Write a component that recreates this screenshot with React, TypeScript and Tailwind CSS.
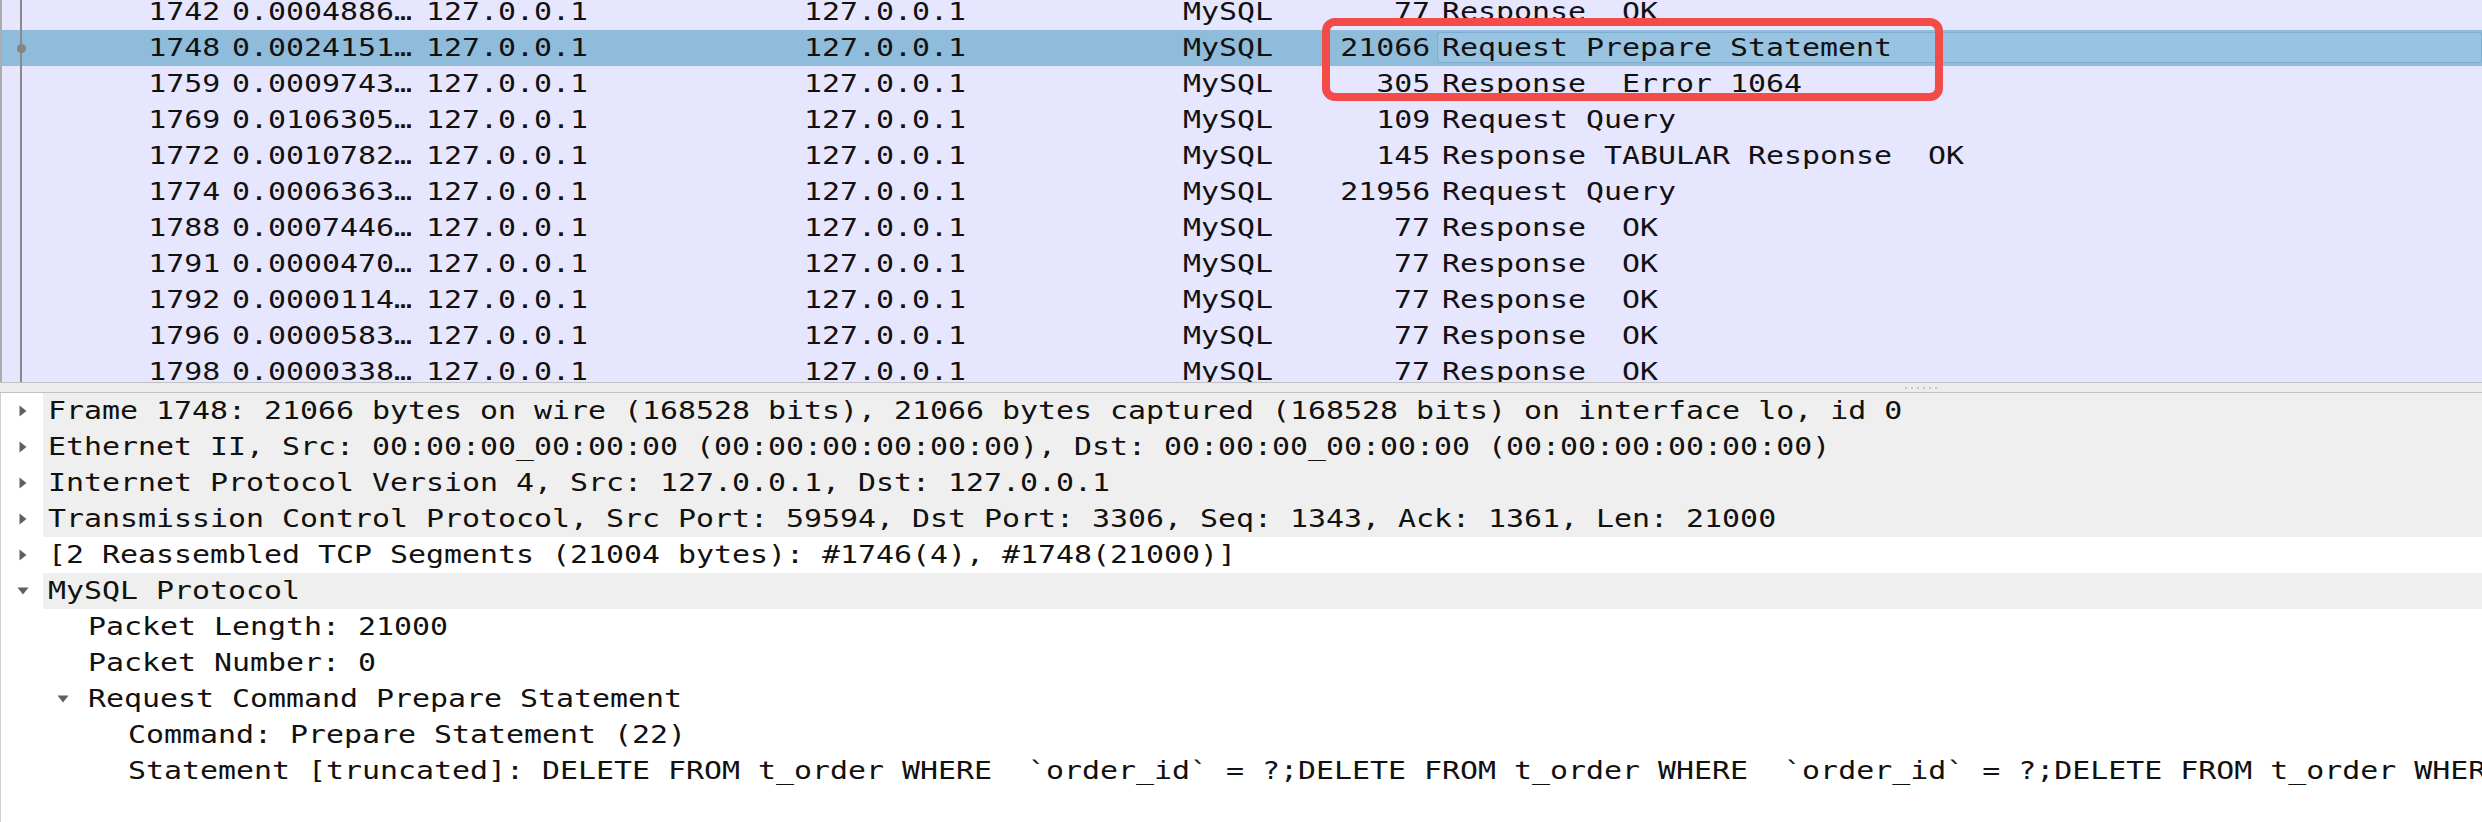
import React from 'react';

type Packet = {
  no: number;
  time: string;
  len: string;
  info: string;
  selected?: boolean;
};

const packets: Packet[] = [
  { no: 1742, time: '0.0004886…', len: '77', info: 'Response  OK' },
  { no: 1748, time: '0.0024151…', len: '21066', info: 'Request Prepare Statement', selected: true },
  { no: 1759, time: '0.0009743…', len: '305', info: 'Response  Error 1064' },
  { no: 1769, time: '0.0106305…', len: '109', info: 'Request Query' },
  { no: 1772, time: '0.0010782…', len: '145', info: 'Response TABULAR Response  OK' },
  { no: 1774, time: '0.0006363…', len: '21956', info: 'Request Query' },
  { no: 1788, time: '0.0007446…', len: '77', info: 'Response  OK' },
  { no: 1791, time: '0.0000470…', len: '77', info: 'Response  OK' },
  { no: 1792, time: '0.0000114…', len: '77', info: 'Response  OK' },
  { no: 1796, time: '0.0000583…', len: '77', info: 'Response  OK' },
  { no: 1798, time: '0.0000338…', len: '77', info: 'Response  OK' },
];

const sql = 'DELETE FROM t_order WHERE  `order_id` = ?;';

type Node = {
  level: number;
  text: string;
  arrow?: 'right' | 'down';
  shaded?: boolean;
};

const tree: Node[] = [
  { level: 0, arrow: 'right', shaded: true, text: 'Frame 1748: 21066 bytes on wire (168528 bits), 21066 bytes captured (168528 bits) on interface lo, id 0' },
  { level: 0, arrow: 'right', shaded: true, text: 'Ethernet II, Src: 00:00:00_00:00:00 (00:00:00:00:00:00), Dst: 00:00:00_00:00:00 (00:00:00:00:00:00)' },
  { level: 0, arrow: 'right', shaded: true, text: 'Internet Protocol Version 4, Src: 127.0.0.1, Dst: 127.0.0.1' },
  { level: 0, arrow: 'right', shaded: true, text: 'Transmission Control Protocol, Src Port: 59594, Dst Port: 3306, Seq: 1343, Ack: 1361, Len: 21000' },
  { level: 0, arrow: 'right', text: '[2 Reassembled TCP Segments (21004 bytes): #1746(4), #1748(21000)]' },
  { level: 0, arrow: 'down', shaded: true, text: 'MySQL Protocol' },
  { level: 1, text: 'Packet Length: 21000' },
  { level: 1, text: 'Packet Number: 0' },
  { level: 1, arrow: 'down', text: 'Request Command Prepare Statement' },
  { level: 2, text: 'Command: Prepare Statement (22)' },
  { level: 2, text: 'Statement [truncated]: ' + sql + sql + sql + sql },
];

// the capture's mono text is wider than DejaVu Sans Mono, so stretch each run
const stretchL = 'inline-block whitespace-pre origin-left scale-x-[1.196]';
const stretchR = 'inline-block whitespace-pre origin-right scale-x-[1.196]';

function PacketRow({ p }: { p: Packet }) {
  return (
    <div className={`flex h-[36px] items-center ${p.selected ? 'bg-[#90bcdb]' : ''}`}>
      <div className="relative flex h-full w-[38px] shrink-0 justify-center">
        <div className="h-full w-[2px] bg-[#8a8a8a]" />
        {p.selected && (
          <div className="absolute top-[14px] h-[9px] w-[9px] rounded-full bg-[#858585]" />
        )}
      </div>
      <div className="w-[180px] shrink-0 text-right">
        <span className={stretchR}>{p.no}</span>
      </div>
      <div className="w-[206px] shrink-0 pl-[12px]">
        <span className={stretchL}>{p.time}</span>
      </div>
      <div className="w-[378px] shrink-0">
        <span className={stretchL}>127.0.0.1</span>
      </div>
      <div className="w-[379px] shrink-0">
        <span className={stretchL}>127.0.0.1</span>
      </div>
      <div className="w-[147px] shrink-0">
        <span className={stretchL}>MySQL</span>
      </div>
      <div className="w-[100px] shrink-0 text-right">
        <span className={stretchR}>{p.len}</span>
      </div>
      <div className="flex h-full min-w-0 flex-1 pl-[7px] pt-[2px] pb-[3px]">
        <div
          className={`flex h-full flex-1 items-center pl-[4px] ${
            p.selected ? 'rounded-[2px] border border-[#80aed0] bg-[#99c4e1]' : 'border border-transparent'
          }`}
        >
          <span className={stretchL}>{p.info}</span>
        </div>
      </div>
    </div>
  );
}

function Arrow({ dir }: { dir: 'right' | 'down' }) {
  if (dir === 'right') {
    return (
      <svg width="8" height="12" viewBox="0 0 8 12">
        <polygon points="0.5,0.5 7.5,6 0.5,11.5" fill="#606060" />
      </svg>
    );
  }
  return (
    <svg width="12" height="8" viewBox="0 0 12 8">
      <polygon points="0.5,0.5 11.5,0.5 6,7.5" fill="#606060" />
    </svg>
  );
}

function TreeRow({ n }: { n: Node }) {
  const indent = n.level === 0 ? '' : n.level === 1 ? 'w-[40px]' : 'w-[80px]';
  return (
    <div className="flex h-[36px] overflow-hidden">
      {n.level > 0 && <div className={`${indent} shrink-0`} />}
      <div className="flex w-[42px] shrink-0 items-center justify-center pl-[1px]">
        {n.arrow && <Arrow dir={n.arrow} />}
      </div>
      <div className={`flex min-w-0 flex-1 items-center pl-[5px] ${n.shaded ? 'bg-[#efefef]' : ''}`}>
        <span className={stretchL}>{n.text}</span>
      </div>
    </div>
  );
}

export default function App() {
  return (
    <div
      className="relative h-[822px] w-[2482px] overflow-hidden bg-white text-[25px] text-[#111]"
      style={{ fontFamily: '"DejaVu Sans Mono", "Liberation Mono", monospace' }}
    >
      {/* packet list */}
      <div className="h-[382px] overflow-hidden border-l-2 border-[#acacac] bg-[#e7e6ff]">
        <div className="-mt-[6px]">
          {packets.map((p) => (
            <PacketRow key={p.no} p={p} />
          ))}
        </div>
      </div>

      {/* splitter */}
      <div className="flex h-[11px] items-center justify-center gap-[4px] border-y border-[#c2c2c2] bg-[#ececec] pl-[1360px]">
        {[0, 1, 2, 3, 4, 5].map((i) => (
          <div key={i} className="h-[2px] w-[2px] bg-[#c4c4c4]" />
        ))}
      </div>

      {/* packet details */}
      <div className="h-[429px] border-l border-[#cfcfcf]">
        {tree.map((n, i) => (
          <TreeRow key={i} n={n} />
        ))}
      </div>

      {/* annotation */}
      <div className="absolute left-[1322px] top-[18px] h-[83px] w-[621px] rounded-[13px] border-[8px] border-[#f34b48]" />
    </div>
  );
}
